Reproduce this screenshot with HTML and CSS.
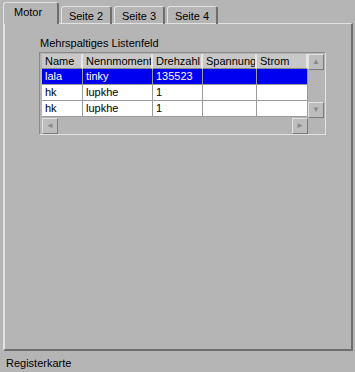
FILE: index.html
```
<!DOCTYPE html>
<html>
    <head>
        <meta charset="UTF-8">
        <title>Registerkarte</title>
        <link rel="stylesheet" href="styles.css">
    </head>
    <body>
        <div class="wrap">
            <div class="tabs">
                <div class="tab active">Motor</div>
                <div class="tab">Seite 2</div>
                <div class="tab">Seite 3</div>
                <div class="tab">Seite 4</div>
            </div>
            <div class="panel">
                <div class="listlabel">Mehrspaltiges Listenfeld</div>
                <div class="listbox">
                    <div class="grid">
                        <div class="head">
                            <div class="hc c1">Name</div>
                            <div class="hc c2">Nennmoment</div>
                            <div class="hc c3">Drehzahl</div>
                            <div class="hc c4">Spannung</div>
                            <div class="hc c5">Strom</div>
                        </div>
                        <div class="row sel">
                            <div class="cell c1">lala</div>
                            <div class="cell c2">tinky</div>
                            <div class="cell c3">135523</div>
                            <div class="cell c4"></div>
                            <div class="cell c5"></div>
                        </div>
                        <div class="row">
                            <div class="cell c1">hk</div>
                            <div class="cell c2">lupkhe</div>
                            <div class="cell c3">1</div>
                            <div class="cell c4"></div>
                            <div class="cell c5"></div>
                        </div>
                        <div class="row">
                            <div class="cell c1">hk</div>
                            <div class="cell c2">lupkhe</div>
                            <div class="cell c3">1</div>
                            <div class="cell c4"></div>
                            <div class="cell c5"></div>
                        </div>
                        <div class="hscroll">
                            <div class="btn">&#9668;</div>
                            <div class="btn">&#9658;</div>
                        </div>
                    </div>
                    <div class="vscroll">
                        <div class="btn">&#9650;</div>
                        <div class="btn">&#9660;</div>
                    </div>
                </div>
            </div>
            <div class="caption">Registerkarte</div>
        </div>
    </body>
</html>
```
FILE: styles.css
```
html, body {
    margin: 0;
    padding: 0;
    background-color: #b5b5b5;
    font-family: "Liberation Sans", Arial, sans-serif;
    font-size: 11px;
    color: #000;
}
.wrap {
    width: 355px;
    height: 372px;
    padding: 2px 0 0 3px;
    box-sizing: border-box;
}
.tabs {
    display: flex;
    align-items: flex-end;
    height: 22px;
    position: relative;
    z-index: 2;
}
.tab {
    height: 18px;
    line-height: 18px;
    width: 51px;
    box-sizing: border-box;
    text-align: center;
    margin-right: 2px;
    border-top: 1px solid #e2e2e2;
    border-left: 1px solid #e2e2e2;
    border-right: 2px solid #6e6e6e;
    border-radius: 3px 3px 0 0;
    background: #b5b5b5;
    box-shadow: inset 0 -1px 0 #e2e2e2;
}
.tab.active {
    height: 22px;
    line-height: 18px;
    width: 56px;
    text-align: left;
    padding-left: 10px;
    box-shadow: none;
}
.panel {
    width: 350px;
    height: 328px;
    box-sizing: border-box;
    border-top: 1px solid #e2e2e2;
    border-left: 2px solid #e2e2e2;
    border-right: 2px solid #6e6e6e;
    border-bottom: 2px solid #6e6e6e;
    padding: 13px 0 0 34px;
    margin-top: -1px;
}
.listlabel {
    height: 15px;
    line-height: 13px;
    padding-left: 1px;
}
.listbox {
    display: flex;
    width: 287px;
    border: 1px solid #8a8a8a;
    border-right-color: #e2e2e2;
    border-bottom-color: #e2e2e2;
    padding: 1px 1px 1px 2px;
    box-sizing: border-box;
    background: #b5b5b5;
}
.grid {
    width: 266px;
}
.head, .row {
    display: flex;
}
.hc {
    height: 15px;
    line-height: 15px;
    padding-left: 3px;
    box-sizing: border-box;
    background: #c8c8c8;
    border-right: 2px solid #e6e6e6;
    border-bottom: 1px solid #8a8a8a;
    overflow: hidden;
    white-space: nowrap;
}
.cell {
    height: 16px;
    line-height: 15px;
    padding-left: 3px;
    box-sizing: border-box;
    background: #fff;
    border-right: 1px solid #9a9a9a;
    border-bottom: 1px solid #9a9a9a;
    white-space: nowrap;
}
.row.sel .cell {
    background: #0000f0;
    color: #fff;
}
.c1 { width: 41px; }
.c2 { width: 70px; }
.c3 { width: 50px; }
.c4 { width: 54px; }
.c5 { width: 51px; }
.hscroll {
    display: flex;
    justify-content: space-between;
    height: 16px;
}
.vscroll {
    display: flex;
    flex-direction: column;
    justify-content: space-between;
    width: 17px;
    height: 64px;
}
.btn {
    width: 14px;
    height: 14px;
    border: 1px solid #e2e2e2;
    border-right-color: #7a7a7a;
    border-bottom-color: #7a7a7a;
    background: #bdbdbd;
    color: #8a8a8a;
    font-size: 8px;
    line-height: 14px;
    text-align: center;
}
.hscroll .btn {
    margin-top: 1px;
}
.caption {
    padding: 6px 0 0 3px;
}
```
